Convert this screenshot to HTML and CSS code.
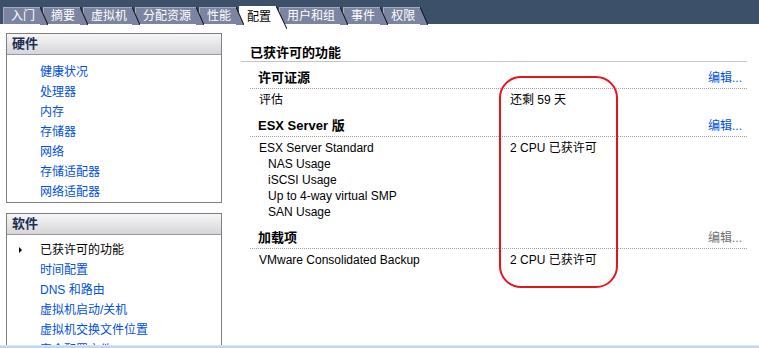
FILE: index.html
```html
<!DOCTYPE html>
<html lang="zh-cn">
<head>
	<meta charset="utf-8">
	<title>配置 - 已获许可的功能</title>
	<link rel="stylesheet" href="styles.css">
</head>
<body>
	<div class="page">
		<div class="tabbar">
			<span class="tab">入门</span>
			<span class="tab">摘要</span>
			<span class="tab">虚拟机</span>
			<span class="tab">分配资源</span>
			<span class="tab">性能</span>
			<span class="tab tab-on">配置</span>
			<span class="tab">用户和组</span>
			<span class="tab">事件</span>
			<span class="tab">权限</span>
		</div>

		<div class="main">
			<div class="side">
				<div class="box">
					<div class="box-hd">硬件</div>
					<ul class="box-list">
						<li><a href="#">健康状况</a></li>
						<li><a href="#">处理器</a></li>
						<li><a href="#">内存</a></li>
						<li><a href="#">存储器</a></li>
						<li><a href="#">网络</a></li>
						<li><a href="#">存储适配器</a></li>
						<li><a href="#">网络适配器</a></li>
					</ul>
				</div>
				<div class="box">
					<div class="box-hd">软件</div>
					<ul class="box-list box-list-sw">
						<li class="cur">已获许可的功能</li>
						<li><a href="#">时间配置</a></li>
						<li><a href="#">DNS 和路由</a></li>
						<li><a href="#">虚拟机启动/关机</a></li>
						<li><a href="#">虚拟机交换文件位置</a></li>
						<li><a href="#">安全配置文件</a></li>
					</ul>
				</div>
			</div>

			<div class="content">
				<div class="title">已获许可的功能</div>

				<div class="sec">
					<div class="sec-hd">许可证源<a href="#" class="edit">编辑...</a></div>
					<div class="row"><span>评估</span><span>还剩 59 天</span></div>
				</div>

				<div class="sec">
					<div class="sec-hd">ESX Server 版<a href="#" class="edit">编辑...</a></div>
					<div class="row"><span>ESX Server Standard</span><span>2 CPU 已获许可</span></div>
					<div class="row sub"><span>NAS Usage</span></div>
					<div class="row sub"><span>iSCSI Usage</span></div>
					<div class="row sub"><span>Up to 4-way virtual SMP</span></div>
					<div class="row sub"><span>SAN Usage</span></div>
				</div>

				<div class="sec">
					<div class="sec-hd">加载项<span class="edit edit-off">编辑...</span></div>
					<div class="row"><span>VMware Consolidated Backup</span><span>2 CPU 已获许可</span></div>
				</div>
			</div>
		</div>

		<div class="statusbar"></div>

		<div class="mark"></div>
	</div>
</body>
</html>
```

FILE: styles.css
```css
*{
	box-sizing: border-box;
}
body{
	margin: 0;
	background: #fff;
	font-family: 'Liberation Sans', 'Noto Sans CJK SC', sans-serif;
	font-size: 12px;
	color: #000;
}
ul{
	margin: 0;
	padding: 0;
	list-style: none;
}
a{
	color: #0050e6;
	text-decoration: none;
}

.page{
	position: relative;
	width: 759px;
	height: 348px;
	overflow: hidden;
}

/* tabs */
.tabbar{
	position: relative;
	z-index: 2;
	display: flex;
	align-items: flex-end;
	height: 24px;
	padding-left: 3px;
	background: #3d5069;
}
.tab{
	position: relative;
	height: 17px;
	line-height: 17px;
	padding: 0 5px 0 7px;
	margin-right: 3px;
	background: #7b85a1;
	border-top: 1px solid #a3abc0;
	border-left: 1px solid #a3abc0;
	color: #fff;
	white-space: nowrap;
}
.tab:after{
	content: '';
	position: absolute;
	z-index: 1;
	top: -1px;
	right: -8px;
	width: 8px;
	height: 18px;
	background: linear-gradient(to top right, #7b85a1 calc(50% - 1px), #111 50%, transparent calc(50% + 1px));
}
.tab-on{
	height: 22px;
	line-height: 20px;
	margin-bottom: -4px;
	background: #fff;
	border-color: #fff;
	color: #000;
}
.tab-on:after{
	right: -11px;
	width: 11px;
	height: 23px;
	background: linear-gradient(to top right, #fff calc(50% - 1px), #111 50%, transparent calc(50% + 1px));
}

/* layout */
.main{
	display: flex;
	height: 321px;
	overflow: hidden;
}
.side{
	width: 216px;
	margin-left: 6px;
	padding-top: 9px;
	flex-shrink: 0;
}
.box{
	border: 1px solid #808080;
	margin-bottom: 10px;
}
.box-hd{
	height: 21px;
	line-height: 20px;
	padding-left: 5px;
	font-size: 13px;
	font-weight: bold;
	color: #1b2d52;
	background: linear-gradient(#f6f6f7, #d6d6da);
	border-bottom: 1px solid #9a9a9a;
}
.box-list{
	padding: 7px 0 0 33px;
}
.box-list-sw{
	padding-top: 5px;
}
.box-list li{
	position: relative;
	height: 20px;
	line-height: 20px;
}
.box-list .cur:before{
	content: '';
	position: absolute;
	left: -21px;
	top: 7px;
	border-top: 3px solid transparent;
	border-bottom: 3px solid transparent;
	border-left: 3px solid #000;
}

/* content */
.content{
	flex: 1;
	margin: 0 12px 0 19px;
}
.title{
	height: 38px;
	padding: 21px 0 0 9px;
	line-height: 16px;
	font-size: 13px;
	font-weight: bold;
	border-bottom: 1px solid #c4c4c4;
}
.sec{
	margin: 7px 0 0 9px;
	padding-bottom: 2px;
}
.sec-hd{
	display: flex;
	justify-content: space-between;
	height: 20px;
	line-height: 18px;
	padding: 0 5px 0 8px;
	font-size: 13px;
	font-weight: bold;
	border-bottom: 1px dotted #a0a0a0;
}
.edit{
	font-size: 12px;
	font-weight: normal;
}
.edit-off{
	color: #707070;
}
.sec-hd + .row{
	margin-top: 3px;
}
.row{
	display: grid;
	grid-template-columns: 251px 1fr;
	height: 16px;
	line-height: 16px;
	padding-left: 9px;
}
.row.sub{
	padding-left: 18px;
}

.statusbar{
	height: 3px;
	border-top: 1px solid #e4e4e4;
	background: #c3d6f1;
}

/* annotation */
.mark{
	position: absolute;
	left: 499px;
	top: 76px;
	width: 119px;
	height: 212px;
	border: 2px solid #e8141c;
	border-radius: 22px;
}
```
